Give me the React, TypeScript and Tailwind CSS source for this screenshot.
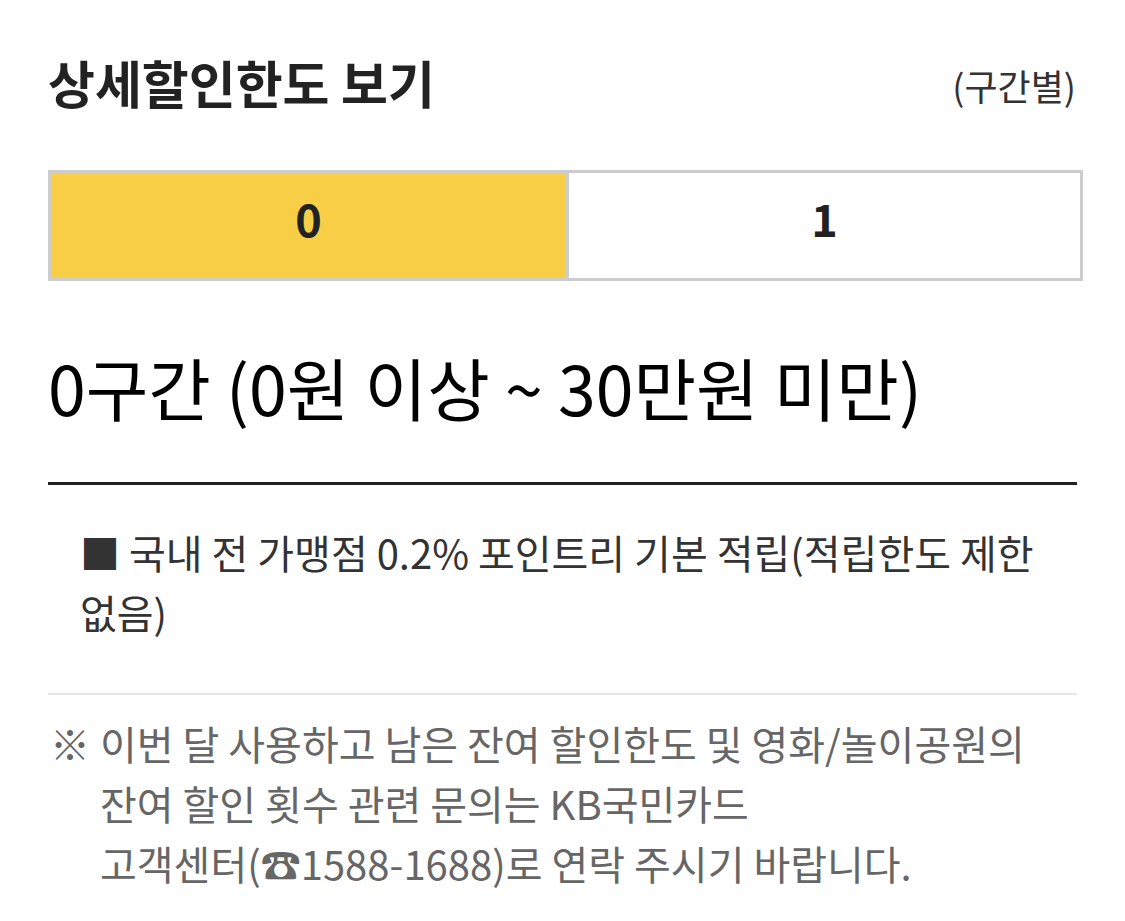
import React from "react";

export default function App() {
  const font = { fontFamily: '"Noto Sans CJK KR", "Noto Sans", sans-serif' };
  return (
    <div className="w-[1125px] h-[921px] bg-white overflow-hidden" style={font}>
      <div className="pl-[48px] pr-[48px]">
        <div className="pt-[32px]">
          <div className="h-[100px] flex items-center justify-between">
            <h1 className="text-[51px] font-bold text-[#222] leading-none">상세할인한도 보기</h1>
            <span className="text-[36px] text-[#333] leading-none mt-[6px] mr-[1px]">(구간별)</span>
          </div>
        </div>
        <div className="mt-[38px] w-[1035px] h-[111px] border-[3px] border-[#cccccc] flex">
          <div className="w-[515px] bg-[#f7ce46] flex items-center justify-center pb-[16px] text-[45px] font-bold text-[#222]">0</div>
          <div className="flex-1 border-l-[3px] border-[#cccccc] bg-white flex items-center justify-center pb-[16px] text-[45px] font-bold text-[#222]">1</div>
        </div>
        <div className="pt-[72px] text-[68px] text-black leading-none h-[201px]">0구간 (0원 이상 ~ 30만원 미만)</div>
        <div className="h-[3px] bg-[#222]"></div>
        <div className="pt-[37px] pl-[32px] text-[40px] leading-[60px] text-[#333] h-[208px]">
          ■ 국내 전 가맹점 0.2% 포인트리 기본 적립(적립한도 제한 없음)
        </div>
        <div className="h-[2px] bg-[#e6e6e6]"></div>
        <div className="pt-[18px] flex text-[40px] leading-[60px] text-[#666]">
          <span className="w-[52px] shrink-0 pl-[2px]">※</span>
          <div>
            이번 달 사용하고 남은 잔여 할인한도 및 영화/놀이공원의
            <br />
            잔여 할인 횟수 관련 문의는 KB국민카드
            <br />
            고객센터(☎1588-1688)로 연락 주시기 바랍니다.
          </div>
        </div>
      </div>
    </div>
  );
}
